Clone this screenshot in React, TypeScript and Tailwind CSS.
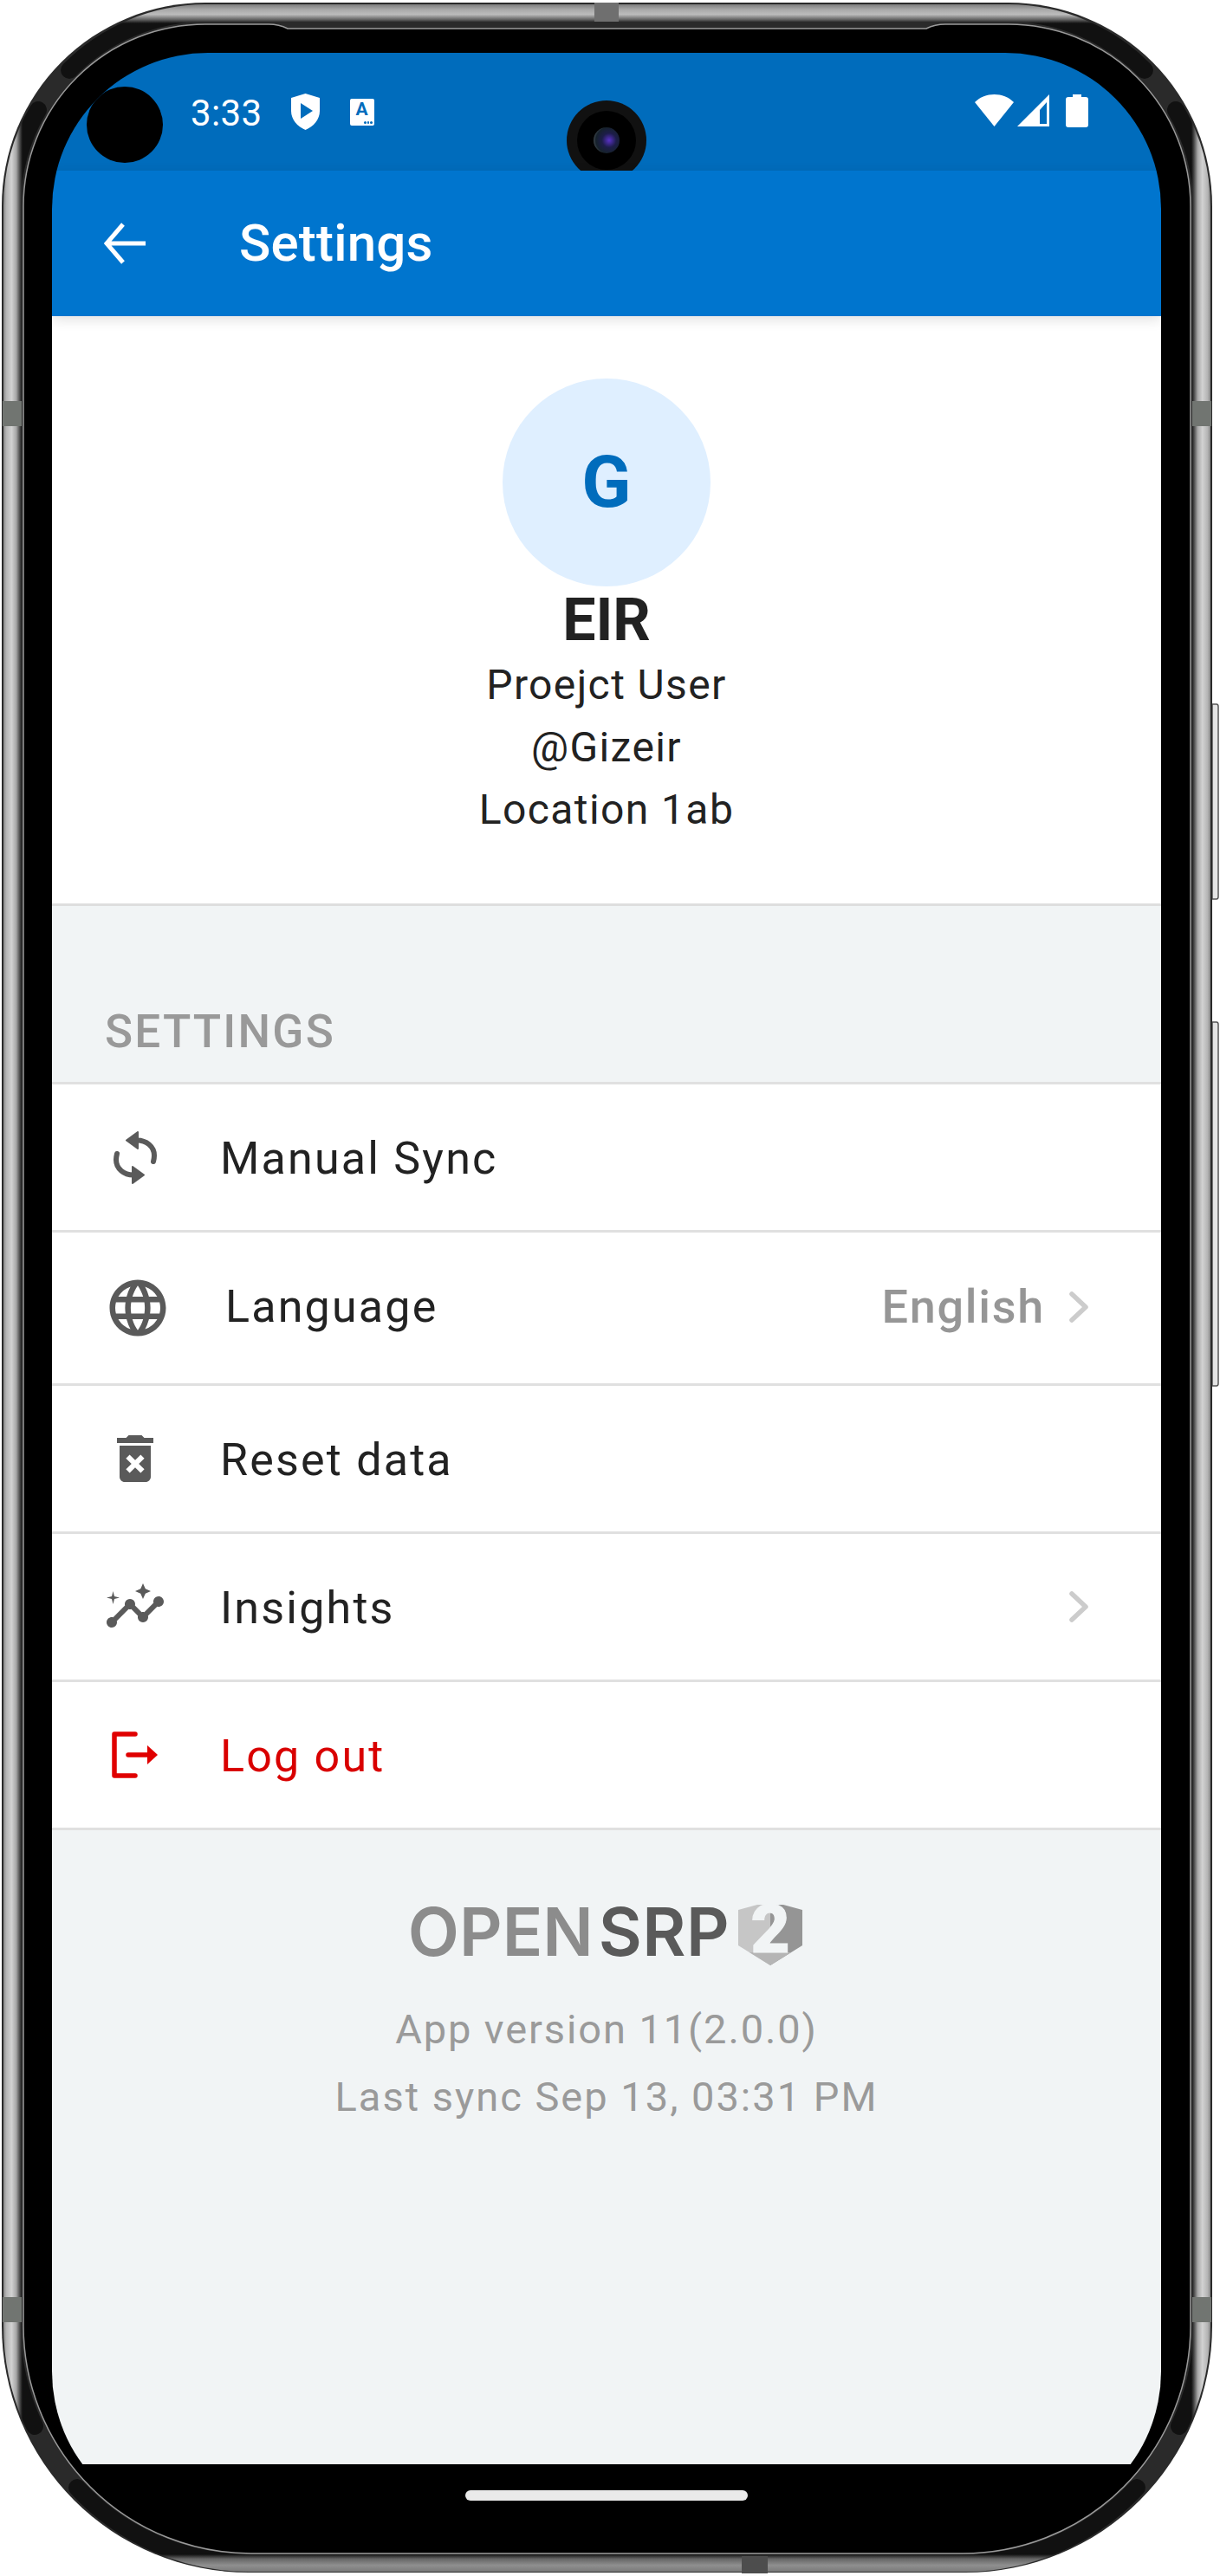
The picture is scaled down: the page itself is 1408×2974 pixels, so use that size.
import React from 'react';
import { MdDeleteForever, MdInsights, MdLanguage } from 'react-icons/md';

const F = 'font-["Roboto",sans-serif]';

// Device bezel: body, metal band, antenna lines and side buttons
const Bezel = () => {
  const outer =
    'M237 3 H1164 A235 235 0 0 1 1399 238 V2685 A285 285 0 0 1 1114 2970 H287 A285 285 0 0 1 2 2685 V238 A235 235 0 0 1 237 3 Z';
  const seam =
    'M27 238 A210 210 0 0 1 237 28 H310 Q322 28 332 33 H1069 Q1079 28 1091 28 H1164 A210 210 0 0 1 1374 238 V2685 A263 263 0 0 1 1111 2948 H290 A263 263 0 0 1 27 2685 Z';
  return (
    <svg className="absolute inset-0" width={1408} height={2974} viewBox="0 0 1408 2974">
      <defs>
        <linearGradient id="bandL" gradientUnits="userSpaceOnUse" x1="3" y1="0" x2="26" y2="0">
          <stop offset="0" stopColor="#777" />
          <stop offset="0.18" stopColor="#b4b4b4" />
          <stop offset="0.45" stopColor="#d2d2d2" />
          <stop offset="0.68" stopColor="#a8a8a8" />
          <stop offset="0.88" stopColor="#444" />
          <stop offset="1" stopColor="#111" />
        </linearGradient>
        <linearGradient id="bandR" gradientUnits="userSpaceOnUse" x1="1375" y1="0" x2="1398" y2="0">
          <stop offset="0" stopColor="#111" />
          <stop offset="0.12" stopColor="#444" />
          <stop offset="0.32" stopColor="#a8a8a8" />
          <stop offset="0.55" stopColor="#d2d2d2" />
          <stop offset="0.82" stopColor="#b4b4b4" />
          <stop offset="1" stopColor="#777" />
        </linearGradient>
        <linearGradient id="bandT" gradientUnits="userSpaceOnUse" x1="0" y1="4" x2="0" y2="27">
          <stop offset="0" stopColor="#777" />
          <stop offset="0.3" stopColor="#a8a8a8" />
          <stop offset="0.55" stopColor="#bcbcbc" />
          <stop offset="0.8" stopColor="#666" />
          <stop offset="1" stopColor="#111" />
        </linearGradient>
        <linearGradient id="bandB" gradientUnits="userSpaceOnUse" x1="0" y1="2949" x2="0" y2="2970">
          <stop offset="0" stopColor="#111" />
          <stop offset="0.25" stopColor="#666" />
          <stop offset="0.6" stopColor="#8f8f8f" />
          <stop offset="1" stopColor="#777" />
        </linearGradient>
      </defs>
      <path d="M1399 813 h5 q2 0 2 3 v219 q0 3 -2 3 h-5 Z" fill="#e4e4e4" stroke="#555" strokeWidth="1.5" />
      <path d="M1399 1180 h5 q2 0 2 3 v414 q0 3 -2 3 h-5 Z" fill="#e4e4e4" stroke="#555" strokeWidth="1.5" />
      <path d={outer} fill="#2a2a2a" />
      <path d="M14 238 V2685 A273 273 0 0 0 40 2801 M14 238 A223 223 0 0 1 44 127" fill="none" stroke="url(#bandL)" strokeWidth="20" strokeLinecap="round" />
      <path d="M1387 238 V2685 A273 273 0 0 1 1361 2801 M1387 238 A223 223 0 0 0 1357 127" fill="none" stroke="url(#bandR)" strokeWidth="20" strokeLinecap="round" />
      <path d="M80 81 A222 222 0 0 1 237 15 H1164 A222 222 0 0 1 1321 81" fill="none" stroke="url(#bandT)" strokeWidth="20" strokeLinecap="round" />
      <path d="M89 2872 A272 272 0 0 0 287 2959 H1114 A272 272 0 0 0 1312 2872" fill="none" stroke="url(#bandB)" strokeWidth="20" strokeLinecap="round" />
      <path d={seam} fill="#000" stroke="#9a9a9a" strokeWidth="1.5" />
      <rect x="3" y="463" width="22" height="29" fill="#717571" />
      <rect x="1376" y="463" width="22" height="29" fill="#717571" />
      <rect x="3" y="2652" width="22" height="29" fill="#717571" />
      <rect x="1376" y="2652" width="22" height="29" fill="#717571" />
      <rect x="686" y="3" width="28" height="22" fill="#6f6f6f" />
      <rect x="856" y="2951" width="30" height="20" fill="#4d4d4d" />
    </svg>
  );
};

const ShieldIcon = () => (
  <svg width={33} height={42} viewBox="0 0 33 42">
    <path d="M16.5 0 L33 5 V20 C33 30 26 38 16.5 42 C7 38 0 30 0 20 V5 Z" fill="#fff" />
    <path d="M11 11 L25 20 L11 29 Z" fill="#006cbc" />
  </svg>
);

const KeyboardIcon = () => (
  <div className={`${F} relative w-[28px] h-[31px] rounded-[2px] bg-white flex justify-center`}>
    <span className="text-[#006cbc] text-[21px] leading-[24px] font-bold">A</span>
    <div className="absolute right-[2px] bottom-[2px] flex gap-[1px]">
      <span className="w-[2.5px] h-[2.5px] bg-[#006cbc] rounded-full" />
      <span className="w-[2.5px] h-[2.5px] bg-[#006cbc] rounded-full" />
      <span className="w-[2.5px] h-[2.5px] bg-[#006cbc] rounded-full" />
    </div>
  </div>
);

const StatusRight = () => (
  <svg width={131} height={38} viewBox="0 0 131 38">
    <path d="M22.5 37 L0 9 C6 3 14 0 22.5 0 C31 0 39 3 45 9 Z" fill="#fff" />
    <path d="M49 37 L86 0 V37 Z M83 9 L75 18 V34 H83 Z" fill="#fff" fillRule="evenodd" />
    <path d="M108 38 h20 q3 0 3 -3 v-29 q0 -3 -3 -3 h-5 v-3 h-10 v3 h-5 q-3 0 -3 3 v29 q0 3 3 3 Z" fill="#fff" />
  </svg>
);

const SyncIcon = () => (
  <svg width={50} height={61} viewBox="0 0 50 61" fill="none">
    <g>
      <path d="M26 10.5 C38 10 47 18 47 28 C47 31 46.5 33 46 35" stroke="#5a5a5a" strokeWidth="6" strokeLinecap="round" />
      <path d="M28 1 V20 L15 10.5 Z" fill="#5a5a5a" stroke="#5a5a5a" strokeWidth="2" strokeLinejoin="round" />
    </g>
    <g transform="rotate(180 25 30.5)">
      <path d="M26 10.5 C38 10 47 18 47 28 C47 31 46.5 33 46 35" stroke="#5a5a5a" strokeWidth="6" strokeLinecap="round" />
      <path d="M28 1 V20 L15 10.5 Z" fill="#5a5a5a" stroke="#5a5a5a" strokeWidth="2" strokeLinejoin="round" />
    </g>
  </svg>
);

const LogoutIcon = () => (
  <svg width={54} height={54} viewBox="0 0 54 54" fill="none">
    <path d="M27 3 H3 V51 H27" stroke="#e00000" strokeWidth="5.5" strokeLinecap="round" strokeLinejoin="round" />
    <path d="M19 27 H44" stroke="#e00000" strokeWidth="5.5" strokeLinecap="round" />
    <path d="M41 16 L53 27 L41 38 Z" fill="#e00000" />
  </svg>
);

const Chevron = () => (
  <svg width={22} height={36} viewBox="0 0 22 36" fill="none">
    <path d="M3 3 L19 18 L3 33" stroke="#cccccc" strokeWidth="5.5" strokeLinecap="round" strokeLinejoin="round" />
  </svg>
);

const OpenSrpMark = () => (
  <svg className="overflow-visible" width={74} height={70} viewBox="0 0 74 70">
    <path d="M0 6 L22 0 H37 V70 L0 47 Z" fill="#c6c6c6" />
    <path d="M74 6 L52 0 H37 V70 L74 47 Z" fill="#959595" />
    <path d="M13 55 H61 L37 70 Z" fill="#b5b5b5" />
    <text x="37" y="55" textAnchor="middle" fontFamily="Roboto, sans-serif" fontWeight="900" fontSize="78" fill="#f1f4f5" stroke="#f1f4f5" strokeWidth="1">2</text>
  </svg>
);

interface RowProps {
  icon: React.ReactNode;
  iconWidth: string;
  label: string;
  height: string;
  labelColor?: string;
  labelOffset?: string;
  right?: React.ReactNode;
}

const Row = ({ icon, iconWidth, label, height, labelColor = 'text-[#222222]', labelOffset = 'mt-[3px]', right }: RowProps) => (
  <div className={`${height} flex flex-none items-center bg-white border-b-[3px] border-[#e0e0e0] pl-[60px] pr-[84px]`}>
    <div className={`${iconWidth} flex flex-none justify-center`}>{icon}</div>
    <span className={`${labelColor} ${labelOffset} ml-[62px] text-[52px] leading-none tracking-[2.2px]`}>{label}</span>
    <div className="ml-auto flex items-center">{right}</div>
  </div>
);

export default function App() {
  return (
    <div className={`${F} relative w-[1408px] h-[2974px] bg-white overflow-hidden pl-[60px] pt-[61px]`}>
      <Bezel />
      <div className="relative w-[1280px] h-[2857px] rounded-[180px] overflow-hidden flex flex-col">
        {/* status bar */}
        <div className="relative flex-none h-[136px] bg-[#006cbc] flex items-center pl-[160px] pr-[84px] text-white">
          <span className="text-[42px] leading-none tracking-[0.4px] mt-[3px]">3:33</span>
          <div className="ml-[33px]"><ShieldIcon /></div>
          <div className="ml-[35px]"><KeyboardIcon /></div>
          <div className="ml-auto mb-[2px]"><StatusRight /></div>
        </div>

        {/* toolbar */}
        <div className="relative z-10 flex-none h-[168px] bg-[#0075ce] flex items-center pl-[60px] shadow-[0_4px_14px_rgba(0,0,0,0.12)]">
          <svg width={48} height={48} viewBox="0 0 48 48" fill="none">
            <path d="M48 24 H3 M22 2 L3 24 L22 46" stroke="#fff" strokeWidth="5" />
          </svg>
          <span className="ml-[108px] text-white text-[60px] leading-none font-medium tracking-[0.2px]">Settings</span>
        </div>

        {/* profile */}
        <div className="flex-none h-[681px] bg-white border-b-[3px] border-[#dedede] flex flex-col items-center pt-[72px] text-[#222222]">
          <div className="w-[240px] h-[240px] rounded-full bg-[#dfefff] flex items-center justify-center">
            <span className="text-[#006cbc] text-[84px] leading-none font-bold">G</span>
          </div>
          <div className="text-[68px] leading-[78px] font-bold">EIR</div>
          <div className="text-[48px] leading-[72px] tracking-[1.4px]">Proejct User</div>
          <div className="text-[48px] leading-[72px] tracking-[1.4px]">@Gizeir</div>
          <div className="text-[48px] leading-[72px] tracking-[1.4px]">Location 1ab</div>
        </div>

        {/* settings list */}
        <div className="flex-none h-[206px] flex items-end border-b-[3px] border-[#e0e0e0] bg-[#f1f4f5] pl-[61px] pb-[28px]">
          <span className="text-[#999999] text-[53px] leading-[60px] font-medium tracking-[2.2px]">SETTINGS</span>
        </div>
        <Row height="h-[171px]" iconWidth="w-[72px]" icon={<SyncIcon />} label="Manual Sync" />
        <Row
          height="h-[177px]"
          iconWidth="w-[78px]"
          icon={<MdLanguage size={78} color="#5a5a5a" />}
          label="Language"
          labelOffset="mb-[3px]"
          right={
            <div className="flex items-center mb-[3px]">
              <span className="text-[#969696] text-[54px] leading-none font-medium tracking-[1.7px]">English</span>
              <span className="ml-[28px] flex"><Chevron /></span>
            </div>
          }
        />
        <Row height="h-[171px]" iconWidth="w-[72px]" icon={<MdDeleteForever size={72} color="#5a5a5a" />} label="Reset data" />
        <Row height="h-[171px]" iconWidth="w-[72px]" icon={<MdInsights size={72} color="#5a5a5a" />} label="Insights" right={<Chevron />} />
        <Row height="h-[171px]" iconWidth="w-[72px]" icon={<LogoutIcon />} label="Log out" labelColor="text-[#d90000]" />

        {/* footer */}
        <div className="flex-1 flex flex-col items-center bg-[#f1f4f5] pt-[79px]">
          <div className="flex items-start h-[77px] ml-[-3px]">
            <span className="text-[#8c8c8c] text-[77px] leading-[77px] font-semibold font-['Inter',sans-serif]">OPEN</span>
            <span className="ml-[6px] text-[#5a5a5a] text-[77px] leading-[77px] tracking-[0.5px] font-semibold font-['Inter',sans-serif]">SRP</span>
            <div className="ml-[10px] mt-[7px]"><OpenSrpMark /></div>
          </div>
          <div className="mt-[35px] text-[#9a9a9a] text-[47px] leading-[78px] tracking-[1.9px]">App version 11(2.0.0)</div>
          <div className="text-[#9a9a9a] text-[47px] leading-[78px] tracking-[2px]">Last sync Sep 13, 03:31 PM</div>
        </div>

        {/* gesture bar */}
        <div className="flex-none h-[73px] bg-black flex justify-center pt-[30px]">
          <div className="w-[326px] h-[12px] rounded-[6px] bg-[#eaeaea]" />
        </div>

        {/* punch holes */}
        <div className="absolute left-[40px] top-[39px] w-[88px] h-[88px] rounded-full bg-black" />
        <div className="absolute left-[594px] top-[55px] w-[92px] h-[92px] rounded-full bg-[#111111] flex items-center justify-center">
          <div className="w-[68px] h-[68px] rounded-full bg-black flex items-center justify-center">
            <div className="w-[30px] h-[30px] rounded-full bg-[radial-gradient(circle_at_60%_50%,#5a32c8_0%,#1d1d4a_35%,#16222c_65%,#8a8a8a_100%)]" />
          </div>
        </div>
      </div>
    </div>
  );
}
